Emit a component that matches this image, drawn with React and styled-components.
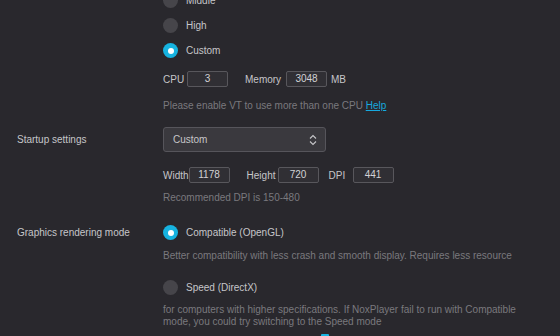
import React from 'react';
import styled, { createGlobalStyle } from 'styled-components';

const GlobalStyle = createGlobalStyle`
  html, body {
    margin: 0;
    padding: 0;
    background: #29282d;
  }
  body {
    font-family: "Liberation Sans", Arial, sans-serif;
    font-size: 10px;
    color: #c6c6c9;
  }
`

const Page = styled.div`
  width: 560px;
  height: 336px;
  overflow: hidden;
  background: #29282d;
`

// the settings panel is scrolled, the top options are cut off
const Content = styled.div`
  margin-top: -12px;
  padding-left: 17px;
  padding-right: 20px;
`

const Section = styled.div`
  display: grid;
  grid-template-columns: 146px 1fr;
`

const SectionLabel = styled.div`
  height: 25px;
  line-height: 25px;
  color: #c6c6c9;
  white-space: nowrap;
  margin-top: ${p => p.top || 0}px;
`

const Body = styled.div`
  display: flex;
  flex-direction: column;
  margin-top: ${p => p.top || 0}px;
`

const RadioRow = styled.label`
  display: flex;
  align-items: center;
  height: 25px;
  gap: 8px;
  color: #c6c6c9;
  margin-top: ${p => p.top || 0}px;
`

const RadioDot = styled.span`
  width: 15px;
  height: 15px;
  border-radius: 50%;
  box-sizing: border-box;
  background: ${p => (p.checked ? '#16b3e0' : '#46454a')};
  display: flex;
  align-items: center;
  justify-content: center;
  &::after {
    content: '';
    display: ${p => (p.checked ? 'block' : 'none')};
    width: 6px;
    height: 6px;
    border-radius: 50%;
    background: #ffffff;
  }
`

const FieldRow = styled.div`
  display: flex;
  align-items: center;
  height: 16px;
  margin-top: ${p => p.top || 0}px;
`

const FieldLabel = styled.span`
  min-width: ${p => p.w || 24}px;
  color: #c6c6c9;
  white-space: nowrap;
`

const Field = styled.div`
  width: 41px;
  height: 16px;
  box-sizing: border-box;
  border: 1px solid #58575c;
  border-radius: 2px;
  background: #302f34;
  color: #d2d2d5;
  text-align: center;
  line-height: 14px;
  margin-right: ${p => p.after || 0}px;
`

const Unit = styled.span`
  margin-left: 4px;
  color: #c6c6c9;
`

const Hint = styled.p`
  margin: ${p => p.top || 0}px 0 0;
  color: #7a797e;
  line-height: 12px;
  max-width: 364px;
`

const HelpLink = styled.a`
  color: #17a9df;
  text-decoration: underline;
`

const Select = styled.div`
  display: flex;
  align-items: center;
  justify-content: space-between;
  width: 163px;
  height: 25px;
  box-sizing: border-box;
  padding: 0 8px 0 9px;
  border: 1px solid #56555b;
  border-radius: 3px;
  background: #3a393e;
  color: #c6c6c9;
  margin-top: ${p => p.top || 0}px;
`

const Check = styled.span`
  display: block;
  width: 8px;
  height: 8px;
  margin-top: 6px;
  margin-left: 158px;
  background: #16b3e0;
  border-radius: 1px;
`

function Chevrons() {
  return (
    <svg width="8" height="12" viewBox="0 0 8 12" fill="none" stroke="#c6c6c9" strokeWidth="1.1">
      <path d="M1 4.5 L4 1.5 L7 4.5" />
      <path d="M1 7.5 L4 10.5 L7 7.5" />
    </svg>
  )
}

export default function App() {
  return (
    <>
      <GlobalStyle />
      <Page>
        <Content>
          <Section>
            <div />
            <Body>
              <RadioRow><RadioDot />Middle</RadioRow>
              <RadioRow><RadioDot />High</RadioRow>
              <RadioRow><RadioDot checked />Custom</RadioRow>
              <FieldRow top={8}>
                <FieldLabel w={24}>CPU</FieldLabel>
                <Field after={17}>3</Field>
                <FieldLabel w={41}>Memory</FieldLabel>
                <Field>3048</Field>
                <Unit>MB</Unit>
              </FieldRow>
              <Hint top={13}>
                Please enable VT to use more than one CPU <HelpLink>Help</HelpLink>
              </Hint>
            </Body>
          </Section>

          <Section>
            <SectionLabel top={15}>Startup settings</SectionLabel>
            <Body>
              <Select top={15}>
                Custom
                <Chevrons />
              </Select>
              <FieldRow top={15}>
                <FieldLabel w={25}>Width</FieldLabel>
                <Field after={17}>1178</Field>
                <FieldLabel w={31}>Height</FieldLabel>
                <Field after={10}>720</Field>
                <FieldLabel w={24}>DPI</FieldLabel>
                <Field>441</Field>
              </FieldRow>
              <Hint top={9}>Recommended DPI is 150-480</Hint>
            </Body>
          </Section>

          <Section>
            <SectionLabel top={16}>Graphics rendering mode</SectionLabel>
            <Body top={16}>
              <RadioRow><RadioDot checked />Compatible (OpenGL)</RadioRow>
              <Hint top={5}>
                Better compatibility with less crash and smooth display. Requires less resource
              </Hint>
              <RadioRow top={13}><RadioDot />Speed (DirectX)</RadioRow>
              <Hint top={4}>
                for computers with higher specifications. If NoxPlayer fail to run with Compatible mode, you could try switching to the Speed mode
              </Hint>
              <Check />
            </Body>
          </Section>
        </Content>
      </Page>
    </>
  )
}
